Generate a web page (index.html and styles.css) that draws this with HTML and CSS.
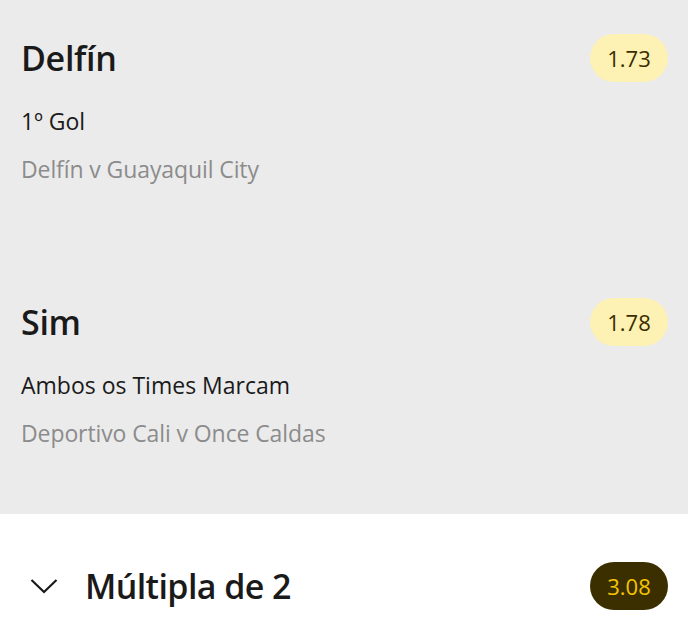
FILE: index.html
```html
<!DOCTYPE html>
<html lang="pt">
<head>
<meta charset="utf-8">
<link rel="stylesheet" href="styles.css">
</head>
<body>
<div class="legs">
  <div class="leg">
    <div class="leg-head">
      <div class="leg-title">Delfín</div>
      <div class="odds">1.73</div>
    </div>
    <div class="leg-market">1º Gol</div>
    <div class="leg-event">Delfín v Guayaquil City</div>
  </div>
  <div class="leg">
    <div class="leg-head">
      <div class="leg-title">Sim</div>
      <div class="odds">1.78</div>
    </div>
    <div class="leg-market">Ambos os Times Marcam</div>
    <div class="leg-event">Deportivo Cali v Once Caldas</div>
  </div>
</div>
<div class="summary">
  <svg class="chevron" width="28" height="16" viewBox="0 0 28 16"><path d="M1.5 2 L14 14 L26.5 2" fill="none" stroke="#1a1a1a" stroke-width="2.2"/></svg>
  <div class="summary-title">Múltipla de 2</div>
  <div class="odds odds-dark">3.08</div>
</div>
</body>
</html>
```
FILE: styles.css
```css
* { box-sizing: border-box; }
html, body { margin: 0; padding: 0; background: #fff; }
body { font-family: "Open Sans", "Noto Sans", sans-serif; color: #1a1a1a; width: 688px; height: 630px; overflow: hidden; }
.legs { background: #ebebeb; height: 514px; overflow: hidden; padding: 34px 20px 0 21px; display: flex; flex-direction: column; }
.leg { height: 264px; flex-shrink: 0; }
.leg-head { display: flex; align-items: center; justify-content: space-between; height: 48px; }
.leg-title { font-size: 34px; font-weight: 600; letter-spacing: -0.3px; }
.odds { width: 78px; height: 48px; border-radius: 24px; background: #fdf1b4; color: #3a2e00; font-size: 22px; display: flex; align-items: center; justify-content: center; }
.leg-market { font-size: 23px; margin-top: 24px; line-height: 30px; }
.leg-event { font-size: 23px; color: #8c8c8c; margin-top: 18px; line-height: 30px; letter-spacing: -0.1px; }
.summary { display: flex; align-items: center; height: 144px; padding: 0 20px 0 30px; }
.chevron { margin-right: 27px; }
.summary-title { font-size: 34px; font-weight: 600; flex: 1; letter-spacing: -0.6px; }
.odds-dark { background: #3b2f00; color: #f5c400; }
```
